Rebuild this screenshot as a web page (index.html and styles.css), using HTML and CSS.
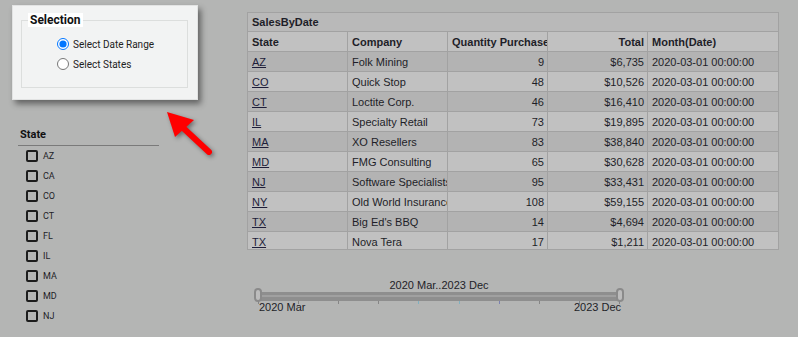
FILE: index.html
```html
<!DOCTYPE html>
<html lang="en">
<head>
  <meta charset="UTF-8">
  <meta name="viewport" content="width=device-width, initial-scale=1.0">
  <title>SalesByDate</title>
  <link rel="stylesheet" href="styles.css">
</head>
<body>
  <div class="page">
    <div class="side">
      <div class="selection-panel">
        <fieldset class="selection">
          <legend>Selection</legend>
          <div class="options">
            <label class="option"><input type="radio" name="mode" checked> Select Date Range</label>
            <label class="option"><input type="radio" name="mode"> Select States</label>
          </div>
        </fieldset>
      </div>

      <div class="state-filter">
        <div class="state-title">State</div>
        <ul class="state-list">
          <li><input type="checkbox"> AZ</li>
          <li><input type="checkbox"> CA</li>
          <li><input type="checkbox"> CO</li>
          <li><input type="checkbox"> CT</li>
          <li><input type="checkbox"> FL</li>
          <li><input type="checkbox"> IL</li>
          <li><input type="checkbox"> MA</li>
          <li><input type="checkbox"> MD</li>
          <li><input type="checkbox"> NJ</li>
        </ul>
      </div>
    </div>

    <div class="main">
      <div class="grid-wrap">
        <table class="grid">
          <colgroup>
            <col class="c-state">
            <col class="c-company">
            <col class="c-qty">
            <col class="c-total">
            <col class="c-month">
          </colgroup>
          <tr class="grid-title"><td colspan="5">SalesByDate</td></tr>
          <tr class="grid-head">
            <td>State</td>
            <td>Company</td>
            <td>Quantity Purchase</td>
            <td class="num">Total</td>
            <td>Month(Date)</td>
          </tr>
          <tr><td><a href="#">AZ</a></td><td>Folk Mining</td><td class="num">9</td><td class="num">$6,735</td><td>2020-03-01 00:00:00</td></tr>
          <tr><td><a href="#">CO</a></td><td>Quick Stop</td><td class="num">48</td><td class="num">$10,526</td><td>2020-03-01 00:00:00</td></tr>
          <tr><td><a href="#">CT</a></td><td>Loctite Corp.</td><td class="num">46</td><td class="num">$16,410</td><td>2020-03-01 00:00:00</td></tr>
          <tr><td><a href="#">IL</a></td><td>Specialty Retail</td><td class="num">73</td><td class="num">$19,895</td><td>2020-03-01 00:00:00</td></tr>
          <tr><td><a href="#">MA</a></td><td>XO Resellers</td><td class="num">83</td><td class="num">$38,840</td><td>2020-03-01 00:00:00</td></tr>
          <tr><td><a href="#">MD</a></td><td>FMG Consulting</td><td class="num">65</td><td class="num">$30,628</td><td>2020-03-01 00:00:00</td></tr>
          <tr><td><a href="#">NJ</a></td><td>Software Specialists</td><td class="num">95</td><td class="num">$33,431</td><td>2020-03-01 00:00:00</td></tr>
          <tr><td><a href="#">NY</a></td><td>Old World Insurance</td><td class="num">108</td><td class="num">$59,155</td><td>2020-03-01 00:00:00</td></tr>
          <tr><td><a href="#">TX</a></td><td>Big Ed's BBQ</td><td class="num">14</td><td class="num">$4,694</td><td>2020-03-01 00:00:00</td></tr>
          <tr><td><a href="#">TX</a></td><td>Nova Tera</td><td class="num">17</td><td class="num">$1,211</td><td>2020-03-01 00:00:00</td></tr>
        </table>
      </div>

      <div class="slider">
        <div class="slider-value">2020 Mar..2023 Dec</div>
        <div class="slider-track">
          <span class="handle"></span>
          <span class="bar"></span>
          <span class="handle"></span>
        </div>
        <div class="ticks">
          <i></i><i></i><i></i><i></i><i class="blue"></i><i class="blue"></i><i class="navy"></i><i></i><i></i><i></i>
        </div>
        <div class="slider-ends">
          <span>2020 Mar</span>
          <span>2023 Dec</span>
        </div>
      </div>
    </div>
  </div>

  <svg class="pointer" width="64" height="60" viewBox="0 0 64 60">
    <line x1="20" y1="20" x2="49" y2="47" stroke="#ff0000" stroke-width="6" stroke-linecap="round"/>
    <polygon points="7,7 34,15 15,32" fill="#ff0000"/>
  </svg>
</body>
</html>
```

FILE: styles.css
```css
html,
body {
  margin: 0;
  height: 100%;
}

body {
  background: #b4b5b4;
  font-family: "Liberation Sans", Arial, sans-serif;
  font-size: 11px;
  color: #1e1e28;
  position: relative;
  overflow: hidden;
}

.page {
  display: flex;
}

.side {
  width: 235px;
  padding: 5px 0 0 12px;
  font-family: Roboto, "Liberation Sans", sans-serif;
}

/* selection popup */
.selection-panel {
  box-sizing: border-box;
  width: 186px;
  height: 95px;
  padding: 7px 9px 0 8px;
  background: #f2f3f3;
  border: 1px solid #e2e3e3;
  box-shadow: 3px 4px 6px rgba(0, 0, 0, .45);
}

.selection {
  margin: 0;
  height: 75px;
  box-sizing: border-box;
  padding: 7px 0 0;
  border: 1px solid #dcdedd;
}

.selection legend {
  margin-left: 6px;
  padding: 0 2px;
  background: #fff;
  font-weight: bold;
  font-size: 12px;
  line-height: 14px;
  color: #111;
}

.options {
  padding-left: 35px;
}

.option {
  display: flex;
  align-items: center;
  gap: 4px;
  height: 20px;
  font-size: 10px;
  color: #222;
}

.option input {
  margin: 0;
  width: 12px;
  height: 12px;
}

/* state filter */
.state-filter {
  margin: 28px 0 0 6px;
  width: 141px;
}

.state-title {
  padding: 0 0 3px 2px;
  line-height: 14px;
  font-weight: bold;
  color: #111;
  border-bottom: 1px solid #7a7a7a;
}

.state-list {
  list-style: none;
  margin: 0;
  padding: 0 0 0 8px;
  font-size: 9px;
}

.state-list li {
  display: flex;
  align-items: center;
  gap: 5px;
  height: 20px;
}

.state-list input {
  appearance: none;
  margin: 0;
  width: 12px;
  height: 12px;
  border: 2px solid #1c1c1c;
  border-radius: 2px;
  box-sizing: border-box;
}

/* grid */
.main {
  padding-top: 12px;
}

.grid-wrap {
  box-sizing: border-box;
  width: 532px;
  height: 238px;
  border: 1px solid #a2a2a2;
  overflow: hidden;
}

.grid {
  table-layout: fixed;
  width: 530px;
  border-collapse: separate;
  border-spacing: 0;
}

.c-state,
.c-company,
.c-qty,
.c-total {
  width: 100px;
}

.grid td {
  box-sizing: border-box;
  height: 20px;
  padding: 0 3px 0 4px;
  border-right: 1px solid #a2a2a2;
  border-bottom: 1px solid #a2a2a2;
  white-space: nowrap;
  overflow: hidden;
  line-height: 18px;
  background: #b3b3b3;
}

.grid td:last-child {
  border-right: 0;
}

.grid tr:nth-child(even) td {
  background: #c1c1c1;
}

.grid .grid-title td {
  height: 19px;
  background: #b9b9b9;
  font-weight: bold;
}

.grid .grid-head td {
  background: #c1c1c1;
  font-weight: bold;
}

.grid .num {
  text-align: right;
}

.grid a {
  color: #1e1e3a;
}

/* range slider */
.slider {
  width: 370px;
  margin: 29px 0 0 7px;
}

.slider-value {
  text-align: center;
  line-height: 13px;
}

.slider-track {
  display: flex;
  height: 14px;
  margin-top: -4px;
}

.handle {
  box-sizing: border-box;
  width: 8px;
  height: 14px;
  border: 2px solid #8a8a8a;
  border-radius: 4px;
  background: #bcbcbc;
  z-index: 1;
}

.bar {
  flex: 1;
  height: 9px;
  margin: 4px -4px 0;
  box-sizing: border-box;
  border-top: 3px solid #8e8e8e;
  border-bottom: 4px solid #8e8e8e;
  background: #a0a0a0;
}

.ticks {
  display: flex;
  justify-content: space-between;
  height: 3px;
  padding: 0 4px;
  margin-top: -1px;
}

.ticks i {
  width: 1px;
  background: #858585;
}

.ticks .blue {
  background: #7fb0c0;
}

.ticks .navy {
  background: #7a80b0;
}

.slider-ends {
  display: flex;
  justify-content: space-between;
  padding: 0 3px 0 5px;
  margin-top: -3px;
  line-height: 13px;
}

/* call-out arrow over the page */
.pointer {
  position: absolute;
  left: 160px;
  top: 105px;
  filter: drop-shadow(2px 2px 2px rgba(0, 0, 0, .4));
}
```
